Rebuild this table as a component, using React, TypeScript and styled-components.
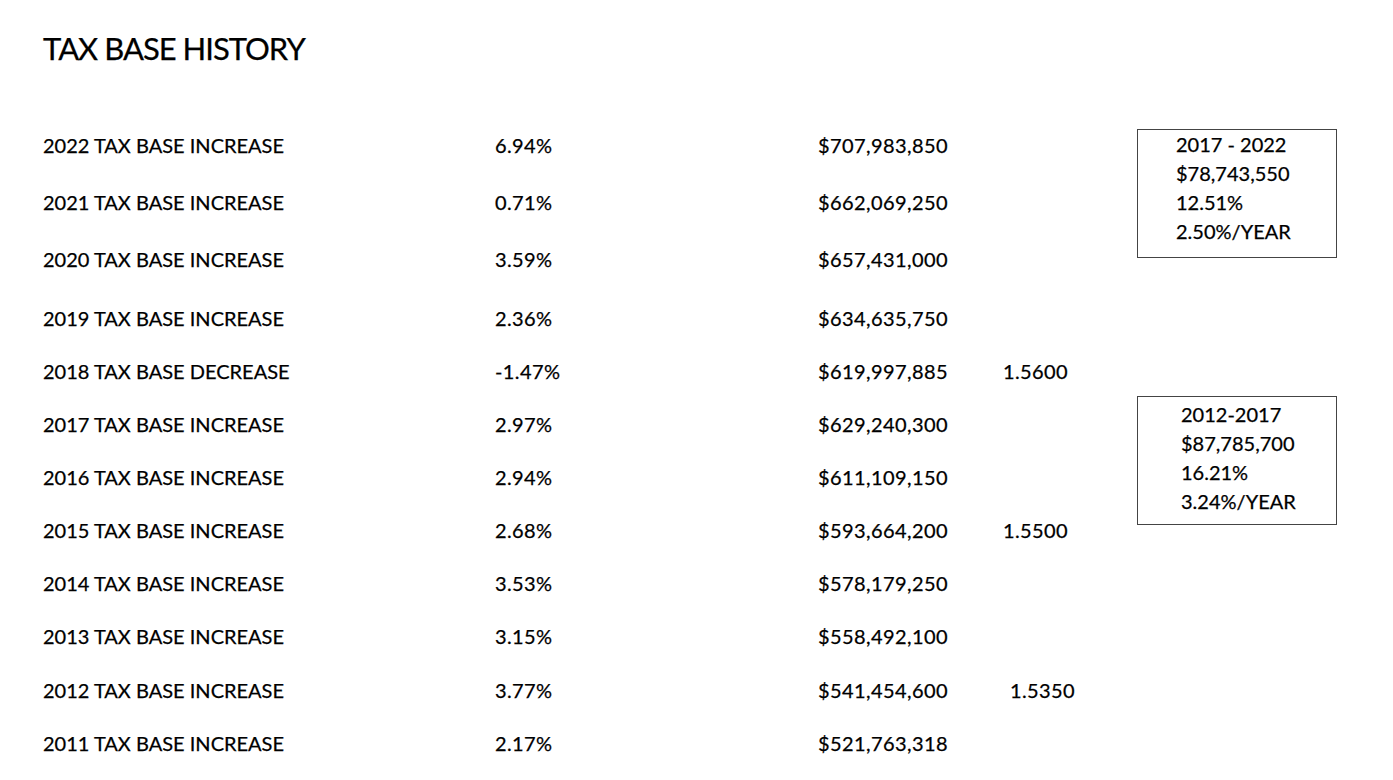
import styled, { createGlobalStyle } from 'styled-components';

const GlobalStyle = createGlobalStyle`
  html, body {
    margin: 0;
    padding: 0;
    background: #ffffff;
  }
  body {
    font-family: 'Lato', 'Open Sans', 'Liberation Sans', sans-serif;
    color: #000000;
    -webkit-text-stroke: 0.25px #000000;
  }
`;

const Page = styled.div`
  width: 1393px;
  height: 780px;
  box-sizing: border-box;
  padding: 28px 0 0 43px;
  overflow: hidden;
`;

const Title = styled.h1`
  margin: 0 0 50px 0;
  font-size: 31px;
  line-height: 40px;
  font-weight: 400;
  letter-spacing: -1px;
`;

const Body = styled.div`
  display: flex;
  align-items: flex-start;
`;

const Table = styled.div`
  display: flex;
  flex-direction: column;
  width: 1094px;
`;

const Row = styled.div<{ $lead: number }>`
  display: grid;
  grid-template-columns: 452px 323px 185px 134px;
  align-items: center;
  height: 53px;
  margin-top: ${(p) => p.$lead}px;
  font-size: 20px;
`;

const Cell = styled.div<{ $shift?: number; $numeric?: boolean }>`
  white-space: nowrap;
  padding-left: ${(p) => p.$shift ?? 0}px;
  letter-spacing: ${(p) => (p.$numeric ? '0.4px' : '0')};
`;

const Side = styled.div`
  display: flex;
  flex-direction: column;
  gap: 138px;
  padding-top: 11px;
`;

const SummaryBox = styled.div<{ $indent: number; $top: number }>`
  width: 200px;
  height: 129px;
  box-sizing: border-box;
  border: 1.5px solid #444444;
  padding: ${(p) => p.$top}px 0 0 ${(p) => p.$indent}px;
  font-size: 20px;
  line-height: 29px;
`;

type TaxRow = {
  label: string;
  pct: string;
  amount: string;
  rate?: string;
  rateShift?: number;
  lead: number;
};

const rows: TaxRow[] = [
  { label: '2022 TAX BASE INCREASE', pct: '6.94%', amount: '$707,983,850', lead: 0 },
  { label: '2021 TAX BASE INCREASE', pct: '0.71%', amount: '$662,069,250', lead: 4 },
  { label: '2020 TAX BASE INCREASE', pct: '3.59%', amount: '$657,431,000', lead: 4 },
  { label: '2019 TAX BASE INCREASE', pct: '2.36%', amount: '$634,635,750', lead: 6 },
  { label: '2018 TAX BASE DECREASE', pct: '-1.47%', amount: '$619,997,885', rate: '1.5600', lead: 0 },
  { label: '2017 TAX BASE INCREASE', pct: '2.97%', amount: '$629,240,300', lead: 0 },
  { label: '2016 TAX BASE INCREASE', pct: '2.94%', amount: '$611,109,150', lead: 0 },
  { label: '2015 TAX BASE INCREASE', pct: '2.68%', amount: '$593,664,200', rate: '1.5500', lead: 0 },
  { label: '2014 TAX BASE INCREASE', pct: '3.53%', amount: '$578,179,250', lead: 0 },
  { label: '2013 TAX BASE INCREASE', pct: '3.15%', amount: '$558,492,100', lead: 0 },
  { label: '2012 TAX BASE INCREASE', pct: '3.77%', amount: '$541,454,600', rate: '1.5350', rateShift: 7, lead: 1 },
  { label: '2011 TAX BASE INCREASE', pct: '2.17%', amount: '$521,763,318', lead: 0 },
];

const summaries = [
  { indent: 38, top: 0, lines: ['2017 - 2022', '$78,743,550', '12.51%', '2.50%/YEAR'] },
  { indent: 43, top: 3, lines: ['2012-2017', '$87,785,700', '16.21%', '3.24%/YEAR'] },
];

const App = () => {
  return (
    <Page>
      <GlobalStyle />
      <Title>TAX BASE HISTORY</Title>
      <Body>
        <Table>
          {rows.map((r) => (
            <Row key={r.label} $lead={r.lead}>
              <Cell>{r.label}</Cell>
              <Cell $numeric>{r.pct}</Cell>
              <Cell $numeric>{r.amount}</Cell>
              <Cell $numeric $shift={r.rateShift}>{r.rate ?? ''}</Cell>
            </Row>
          ))}
        </Table>
        <Side>
          {summaries.map((s) => (
            <SummaryBox key={s.lines[0]} $indent={s.indent} $top={s.top}>
              {s.lines.map((line) => (
                <div key={line}>{line}</div>
              ))}
            </SummaryBox>
          ))}
        </Side>
      </Body>
    </Page>
  );
};

export default App;
